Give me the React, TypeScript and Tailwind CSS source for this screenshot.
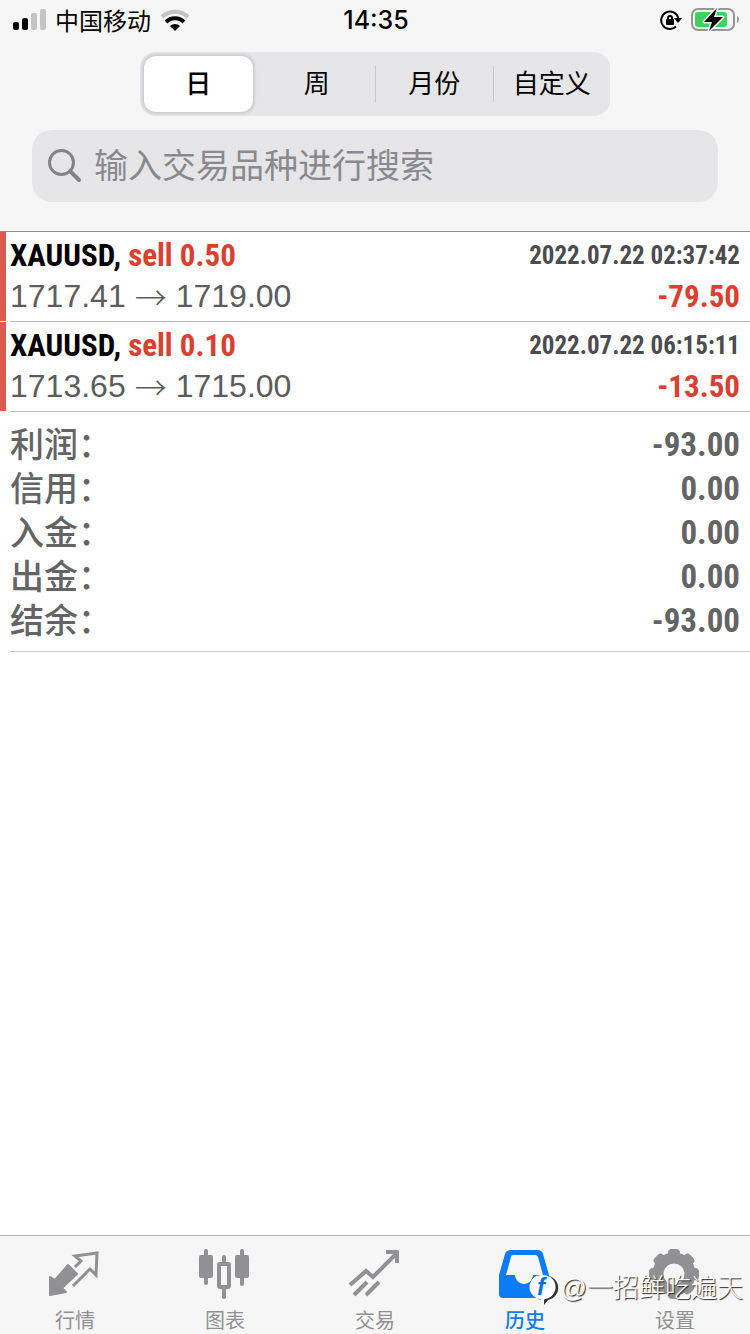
import { useState } from 'react'
import type { ReactNode } from 'react'

const narrow = "font-['Roboto_Condensed','Liberation_Sans_Narrow','Liberation_Sans',sans-serif]"

const periods = ['日', '周', '月份', '自定义']

const deals = [
  { symbol: 'XAUUSD', side: 'sell 0.50', open: '1717.41', close: '1719.00', time: '2022.07.22 02:37:42', profit: '-79.50' },
  { symbol: 'XAUUSD', side: 'sell 0.10', open: '1713.65', close: '1715.00', time: '2022.07.22 06:15:11', profit: '-13.50' },
]

const totals = [
  { label: '利润：', value: '-93.00' },
  { label: '信用：', value: '0.00' },
  { label: '入金：', value: '0.00' },
  { label: '出金：', value: '0.00' },
  { label: '结余：', value: '-93.00' },
]

function TabIcon({ children }: { children: ReactNode }) {
  return (
    <svg viewBox="0 0 54 51" className="h-[51px] w-[54px]" fill="currentColor" aria-hidden>
      {children}
    </svg>
  )
}

const tabs = [
  {
    label: '行情',
    icon: (
      <TabIcon>
        <path d="M2 29v18l16-3-4-4 15-14-9-9L7 32z" stroke="currentColor" strokeWidth="2" strokeLinejoin="round" />
        <path d="M27 19l6-6-6-5 22-3-1 22-6-6-17 17" fill="none" stroke="currentColor" strokeWidth="3" />
      </TabIcon>
    ),
  },
  {
    label: '图表',
    icon: (
      <TabIcon>
        <rect x="1" y="7" width="14" height="23" rx="2" />
        <rect x="6" y="1" width="4" height="36" rx="2" />
        <rect x="37" y="7" width="14" height="23" rx="2" />
        <rect x="42" y="1" width="4" height="37" rx="2" />
        <rect x="21" y="16" width="10" height="23" rx="1" fill="none" stroke="currentColor" strokeWidth="4" />
        <rect x="24" y="7" width="4" height="8" rx="2" />
        <rect x="24" y="39" width="4" height="12" rx="2" />
      </TabIcon>
    ),
  },
  {
    label: '交易',
    icon: (
      <TabIcon>
        <g fill="none" stroke="currentColor" strokeWidth="4">
          <path d="M2 37l16-14 7 6L48 6" />
          <path d="M38 4h11v11" strokeLinejoin="round" />
          <path d="M6 47l13-13M18 47l13-13" />
        </g>
      </TabIcon>
    ),
  },
  {
    label: '历史',
    icon: (
      <TabIcon>
        <path
          fillRule="evenodd"
          d="M1 27L7 6q1-4 6-4h26q5 0 6 4l6 21v19q0 4-4 4H5q-4 0-4-4zM8 27h9a9 9 0 0 0 18 0h10L40 9q-1-2-3-2H15q-2 0-2 2z"
        />
      </TabIcon>
    ),
  },
  {
    label: '设置',
    icon: (
      <TabIcon>
        <circle cx="26" cy="26" r="16" fill="none" stroke="currentColor" strokeWidth="11" />
        {[0, 45, 90, 135, 180, 225, 270, 315].map((angle) => (
          <rect key={angle} x="20" y="1" width="12" height="9" rx="4" transform={`rotate(${angle} 26 26)`} />
        ))}
      </TabIcon>
    ),
  },
]

function StatusBar() {
  return (
    <div className="grid h-10 grid-cols-3 items-center pr-[11px] pl-[13px] text-2xl text-black">
      <div className="flex items-center gap-[9px]">
        <svg viewBox="0 0 33 22" className="h-[22px] w-[33px]" aria-hidden>
          <rect x="0" y="13" width="6" height="8" rx="2" />
          <rect x="9" y="9" width="6" height="12" rx="2" />
          <rect x="18" y="4" width="6" height="17" rx="2" fill="#c4c4c4" />
          <rect x="27" y="0" width="6" height="21" rx="2" fill="#c4c4c4" />
        </svg>
        <span className="pt-1">中国移动</span>
        <svg viewBox="0 0 30 22" className="h-[22px] w-[30px]" fill="none" aria-hidden>
          <path d="M2 8a18.500 18.500 0 0 1 26 0" stroke="#c4c4c4" strokeWidth="4" />
          <path d="M6 13a12.500 12.500 0 0 1 18 0" stroke="#000" strokeWidth="4" />
          <path d="M10 17a7 7 0 0 1 10 0L15 22z" fill="#000" />
        </svg>
      </div>
      <span className="pt-0.5 text-center font-['Inter','Liberation_Sans',sans-serif] text-[25px] font-medium">14:35</span>
      <div className="flex items-center justify-end gap-[9px]">
        <svg viewBox="0 0 22 20" className="h-5 w-[22px]" fill="none" stroke="#000" strokeWidth="2" aria-hidden>
          <path d="M16 16.500A8.700 8.700 0 1 1 18.300 8" />
          <path d="M14 8h8l-4 5z" fill="#000" stroke="none" />
          <rect x="6" y="9" width="8" height="6" rx="1" fill="#000" stroke="none" />
          <path d="M8 9V8a2 2 0 0 1 4 0v1" />
        </svg>
        <svg viewBox="0 0 48 26" className="h-[26px] w-12" aria-hidden>
          <rect x="1" y="2" width="42" height="21" rx="6" fill="none" stroke="#96969a" strokeWidth="2" />
          <rect x="4" y="5" width="32" height="15" rx="3" fill="#3fd160" />
          <path d="M46 9v7q2-1 2-3.500T46 9" fill="#96969a" />
          <path
            d="M26 1L13 15h8l-3 9 14-14h-9z"
            stroke="#f6f6f6"
            strokeWidth="3"
            strokeLinejoin="round"
            paintOrder="stroke"
          />
        </svg>
      </div>
    </div>
  )
}

function PeriodPicker() {
  const [active, setActive] = useState(0)
  return (
    <div role="tablist" className="mx-auto mt-3 flex h-16 w-[470px] items-center rounded-2xl bg-[#e6e6e8] text-[26px] text-black">
      {periods.map((period, i) => (
        <div
          key={period}
          className={`flex h-9 flex-1 items-center border-l ${i > 1 ? 'border-[#c8c8cb]' : 'border-transparent'}`}
        >
          <button
            type="button"
            role="tab"
            aria-selected={i === active}
            onClick={() => setActive(i)}
            className={`-my-3 h-14 flex-1 rounded-xl ${
              i === active ? 'mr-[5px] ml-[3px] bg-white font-medium shadow-[0_0_3px_2px_rgba(0,0,0,0.12)]' : ''
            }`}
          >
            {period}
          </button>
        </div>
      ))}
    </div>
  )
}

function DealRow({ deal }: { deal: (typeof deals)[number] }) {
  return (
    <li className="flex h-[90px] border-b border-transparent">
      <span className="w-1.5 bg-[#dc5b50]" />
      <div className="-mb-px ml-1 flex-1 border-b border-[#bdbdc0] pt-[3px] pr-[10px]">
        <div className={`flex items-center justify-between leading-[41px] font-bold ${narrow}`}>
          <span className="text-[31px] text-black">
            {deal.symbol}, <span className="text-[#d94032]">{deal.side}</span>
          </span>
          <time className="text-[25px] text-[#4c4c50]">{deal.time}</time>
        </div>
        <div className="flex items-center justify-between leading-[41px]">
          <span className="flex items-center gap-[9px] text-[32px] text-[#5c5c5e]">
            {deal.open}
            <span className="font-['Noto_Sans_CJK_SC',sans-serif] font-light">→</span>
            {deal.close}
          </span>
          <span className={`text-[31px] font-bold text-[#d94032] ${narrow}`}>{deal.profit}</span>
        </div>
      </div>
    </li>
  )
}

function Watermark() {
  return (
    <div className="pointer-events-none absolute right-[7px] bottom-7 flex items-center gap-0.5 text-[26px] leading-9 text-white">
      <svg viewBox="0 0 30 34" className="h-[34px] w-[30px]" aria-hidden>
        <path d="M13 4a12 12 0 0 1 4 24l-4 5v-5A12 12 0 0 1 13 4" fill="#333" transform="translate(2 1)" />
        <path d="M13 4a12 12 0 0 1 3 24l-4 5v-5A12 12 0 0 1 13 4" fill="#fff" />
        <text x="8" y="24" fill="#0a6fdc" fontSize="24" fontWeight="bold" fontStyle="italic" fontFamily="Liberation Sans">
          f
        </text>
      </svg>
      <span className="font-light [text-shadow:1px_1px_1px_#222]">@一招鲜吃遍天</span>
    </div>
  )
}

export default function App() {
  const [tab, setTab] = useState('历史')
  return (
    <div className="relative flex min-h-screen flex-col bg-white font-['Liberation_Sans','Noto_Sans_CJK_SC',sans-serif]">
      <header className="border-b border-[#8e8e90] bg-[#f6f6f6] pb-[29px]">
        <StatusBar />
        <PeriodPicker />
        <label className="mx-8 mt-[14px] flex h-[72px] items-center gap-3 rounded-[20px] bg-[#e6e6e8] px-4">
          <svg viewBox="0 0 34 34" className="h-[34px] w-[34px] shrink-0" fill="none" stroke="#848488" aria-hidden>
            <circle cx="13.500" cy="13.500" r="12" strokeWidth="3" />
            <path d="M22 22l9 9" strokeWidth="4" strokeLinecap="round" />
          </svg>
          <input
            type="search"
            aria-label="搜索"
            placeholder="输入交易品种进行搜索"
            className="min-w-0 flex-1 bg-transparent text-[34px] text-black outline-none placeholder:text-[#8a8a8e]"
          />
        </label>
      </header>

      <main className="flex-1">
        <ul>
          {deals.map((deal) => (
            <DealRow key={deal.time} deal={deal} />
          ))}
        </ul>
        <dl className="ml-[10px] border-b border-[#c6c6c8] pt-[11px] pr-[10px] pb-2 text-[34px] leading-[44px] font-medium text-[#646466]">
          {totals.map((row) => (
            <div key={row.label} className="flex justify-between">
              <dt>{row.label}</dt>
              <dd className={`text-[33px] font-bold ${narrow}`}>{row.value}</dd>
            </div>
          ))}
        </dl>
      </main>

      <nav className="flex border-t border-[#b4b4b6] bg-[#f6f6f6]">
        {tabs.map((item) => (
          <button
            key={item.label}
            type="button"
            onClick={() => setTab(item.label)}
            aria-current={item.label === tab ? 'page' : undefined}
            className={`flex flex-1 flex-col items-center gap-[10px] pt-3 pb-px text-xl leading-6 ${
              item.label === tab ? 'font-medium text-[#0a7cf6]' : 'text-[#919193]'
            }`}
          >
            {item.icon}
            {item.label}
          </button>
        ))}
      </nav>
      <Watermark />
    </div>
  )
}
